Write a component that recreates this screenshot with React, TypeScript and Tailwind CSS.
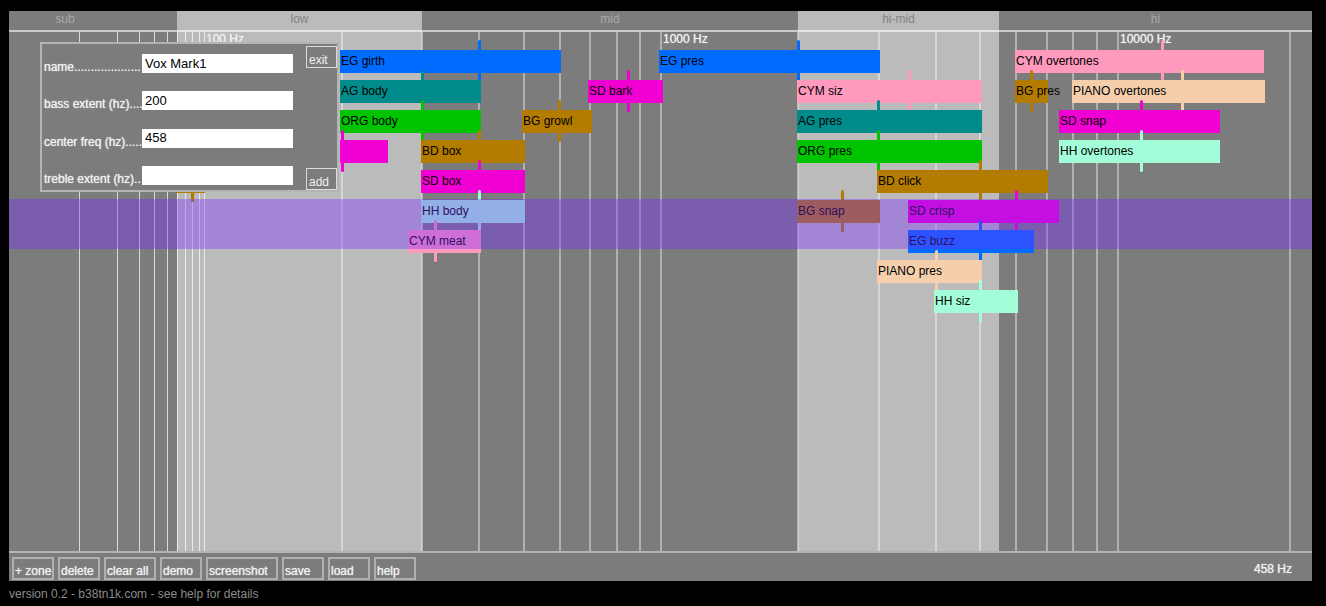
import React from "react";

const CHART_WIDTH = 1303;

const pct = (x: number) => `${(x / CHART_WIDTH) * 100}%`;

const bands = [
  { name: "sub", className: "grow-[168] bg-[#7c7c7c] text-[#a8a8a8]", labelClass: "pr-14" },
  { name: "low", className: "grow-[245] bg-[#bbbbbb] text-[#828282]", labelClass: "" },
  { name: "mid", className: "grow-[376] bg-[#7c7c7c] text-[#a8a8a8]", labelClass: "" },
  { name: "hi-mid", className: "grow-[201] bg-[#bbbbbb] text-[#828282]", labelClass: "" },
  { name: "hi", className: "grow-[313] bg-[#7c7c7c] text-[#a8a8a8]", labelClass: "" },
];

const thinLines = [70, 108, 130, 145, 158, 168, 176, 183, 190, 195];
const lines = [
  332, 412, 469, 514, 550, 580, 607, 630, 651, 788, 869, 926, 970, 1006, 1037, 1063, 1087, 1108, 1280,
];

const marks = [
  { x: 197, label: "100 Hz" },
  { x: 654, label: "1000 Hz" },
  { x: 1111, label: "10000 Hz" },
];

type Zone = { name: string; row: number; from: number; to: number; center: number; color: string };

const BLUE = "bg-[#006cff]";
const TEAL = "bg-[#008c8a]";
const GREEN = "bg-[#00c400]";
const BROWN = "bg-[#b37b00]";
const MAGENTA = "bg-[#f000d2]";
const PINK = "bg-[#ff99be]";
const PEACH = "bg-[#f5cfac]";
const MINT = "bg-[#a2fdd8]";

const zones: Zone[] = [
  { name: "", row: 0, from: 168, to: 196, center: 183, color: PEACH },
  { name: "EG girth", row: 0, from: 331, to: 552, center: 470, color: BLUE },
  { name: "EG pres", row: 0, from: 650, to: 871, center: 789, color: BLUE },
  { name: "CYM overtones", row: 0, from: 1006, to: 1255, center: 1153, color: PINK },
  { name: "AG body", row: 1, from: 331, to: 472, center: 413, color: TEAL },
  { name: "SD bark", row: 1, from: 579, to: 654, center: 619, color: MAGENTA },
  { name: "CYM siz", row: 1, from: 788, to: 973, center: 900, color: PINK },
  { name: "BG pres", row: 1, from: 1006, to: 1039, center: 1022, color: BROWN },
  { name: "PIANO overtones", row: 1, from: 1063, to: 1256, center: 1173, color: PEACH },
  { name: "ORG body", row: 2, from: 331, to: 472, center: 413, color: GREEN },
  { name: "BG growl", row: 2, from: 513, to: 583, center: 550, color: BROWN },
  { name: "AG pres", row: 2, from: 788, to: 973, center: 869, color: TEAL },
  { name: "SD snap", row: 2, from: 1050, to: 1211, center: 1132, color: MAGENTA },
  { name: "", row: 3, from: 331, to: 379, center: 333, color: MAGENTA },
  { name: "BD box", row: 3, from: 412, to: 516, center: 470, color: BROWN },
  { name: "ORG pres", row: 3, from: 788, to: 973, center: 869, color: GREEN },
  { name: "HH overtones", row: 3, from: 1050, to: 1211, center: 1132, color: MINT },
  { name: "", row: 4, from: 167, to: 196, center: 183, color: BROWN },
  { name: "SD box", row: 4, from: 412, to: 516, center: 470, color: MAGENTA },
  { name: "BD click", row: 4, from: 868, to: 1039, center: 971, color: BROWN },
  { name: "HH body", row: 5, from: 412, to: 516, center: 470, color: MINT },
  { name: "BG snap", row: 5, from: 788, to: 871, center: 833, color: BROWN },
  { name: "SD crisp", row: 5, from: 899, to: 1050, center: 1007, color: MAGENTA },
  { name: "CYM meat", row: 6, from: 399, to: 472, center: 426, color: PINK },
  { name: "EG buzz", row: 6, from: 899, to: 1025, center: 971, color: BLUE },
  { name: "PIANO pres", row: 7, from: 868, to: 973, center: 927, color: PEACH },
  { name: "HH siz", row: 8, from: 925, to: 1009, center: 971, color: MINT },
];

const fields = [
  { id: "zone-name", label: "name....................", value: "Vox Mark1" },
  { id: "zone-bass", label: "bass extent (hz)....", value: "200" },
  { id: "zone-center", label: "center freq (hz).....", value: "458" },
  { id: "zone-treble", label: "treble extent (hz)..", value: "" },
];

const actions = [
  { label: "+ zone", width: "w-[42px]" },
  { label: "delete", width: "w-[42px]" },
  { label: "clear all", width: "w-[52px]" },
  { label: "demo", width: "w-[42px]" },
  { label: "screenshot", width: "w-[72px]" },
  { label: "save", width: "w-[42px]" },
  { label: "load", width: "w-[42px]" },
  { label: "help", width: "w-[42px]" },
];

function Bands() {
  return (
    <div className="flex flex-1">
      {bands.map((b) => (
        <div key={b.name} className={`flex basis-0 flex-col ${b.className}`}>
          <div className={`h-[21px] border-b-2 border-white/60 text-center leading-4 ${b.labelClass}`}>
            {b.name}
          </div>
        </div>
      ))}
    </div>
  );
}

function GridLines() {
  return (
    <div className="absolute inset-x-0 top-[21px] bottom-0">
      {thinLines.map((x) => (
        <div key={x} className="absolute inset-y-0 w-px bg-white/70" style={{ left: pct(x) }} />
      ))}
      {lines.map((x) => (
        <div key={x} className="absolute inset-y-0 w-[2px] bg-white/40" style={{ left: pct(x) }} />
      ))}
      {marks.map((m) => (
        <div
          key={m.label}
          className="absolute top-0 leading-[14px] whitespace-nowrap text-[#f0f0f0] [text-shadow:0_0_1px_#f0f0f0]"
          style={{ left: pct(m.x) }}
        >
          {m.label}
        </div>
      ))}
    </div>
  );
}

function ZoneBar({ zone }: { zone: Zone }) {
  const top = 39 + zone.row * 30;
  return (
    <>
      <div
        className={`absolute h-[42px] w-[3px] rounded-full ${zone.color}`}
        style={{ left: pct(zone.center - 1), top: top - 10 }}
      />
      <div
        className={`absolute h-[23px] pl-px leading-[22px] whitespace-nowrap text-black ${zone.color}`}
        style={{ left: pct(zone.from), width: pct(zone.to - zone.from), top }}
      >
        {zone.name}
      </div>
    </>
  );
}

function ZoneDialog() {
  return (
    <form
      className="absolute top-[31px] left-[31px] flex h-[150px] w-[299px] justify-between border-2 border-[#b4b4b4] bg-[#7c7c7c] pl-[2px] text-[#f0f0f0] [text-shadow:0_0_1px_#f0f0f0]"
      onSubmit={(e) => e.preventDefault()}
    >
      <div className="flex flex-col justify-between pt-[10px] pb-[5px]">
        {fields.map((f) => (
          <div key={f.id} className="flex h-[19px]">
            <label htmlFor={f.id} className="w-[98px] pt-[5px] leading-4 whitespace-nowrap">
              {f.label}
            </label>
            <input
              id={f.id}
              type="text"
              defaultValue={f.value}
              className="h-[19px] w-[151px] bg-white px-[3px] text-[13px] text-black outline-none [text-shadow:none]"
            />
          </div>
        ))}
      </div>
      <div className="flex flex-col justify-between pt-[2px]">
        <button type="button" className="h-[22px] w-[31px] border border-[#dcdcdc] pt-[5px] pl-[2px] text-left leading-4">
          exit
        </button>
        <button type="submit" className="h-[22px] w-[31px] border border-[#dcdcdc] pt-[5px] pl-[2px] text-left leading-4">
          add
        </button>
      </div>
    </form>
  );
}

export default function App() {
  return (
    <div className="flex min-h-screen flex-col bg-black pt-[11px] pr-[14px] pl-[9px] font-['Liberation_Sans',Arial,sans-serif] text-[12px]">
      <main className="relative flex min-h-[400px] flex-1 flex-col">
        <Bands />
        <GridLines />
        {zones.map((z, i) => (
          <ZoneBar key={i} zone={z} />
        ))}
        <div className="absolute inset-x-0 top-[188px] h-[50px] bg-[rgba(119,40,255,0.37)]" />
        <ZoneDialog />
      </main>
      <div className="flex h-[30px] justify-between border-t-2 border-[#b4b4b4] bg-[#7c7c7c] pt-1 pr-5 pl-[3px] text-[#f0f0f0]">
        <div className="flex gap-1">
          {actions.map((a) => (
            <button
              key={a.label}
              type="button"
              className={`h-[23px] border-2 border-[#b0b0b0] pt-1 pl-px text-left leading-4 whitespace-nowrap [text-shadow:0_0_1px_#f0f0f0] ${a.width}`}
            >
              {a.label}
            </button>
          ))}
        </div>
        <output className="pt-1 leading-4 [text-shadow:0_0_1px_#f0f0f0]">458 Hz</output>
      </div>
      <footer className="pt-px leading-6 text-[#8c8c8c]">version 0.2 - b38tn1k.com - see help for details</footer>
    </div>
  );
}
